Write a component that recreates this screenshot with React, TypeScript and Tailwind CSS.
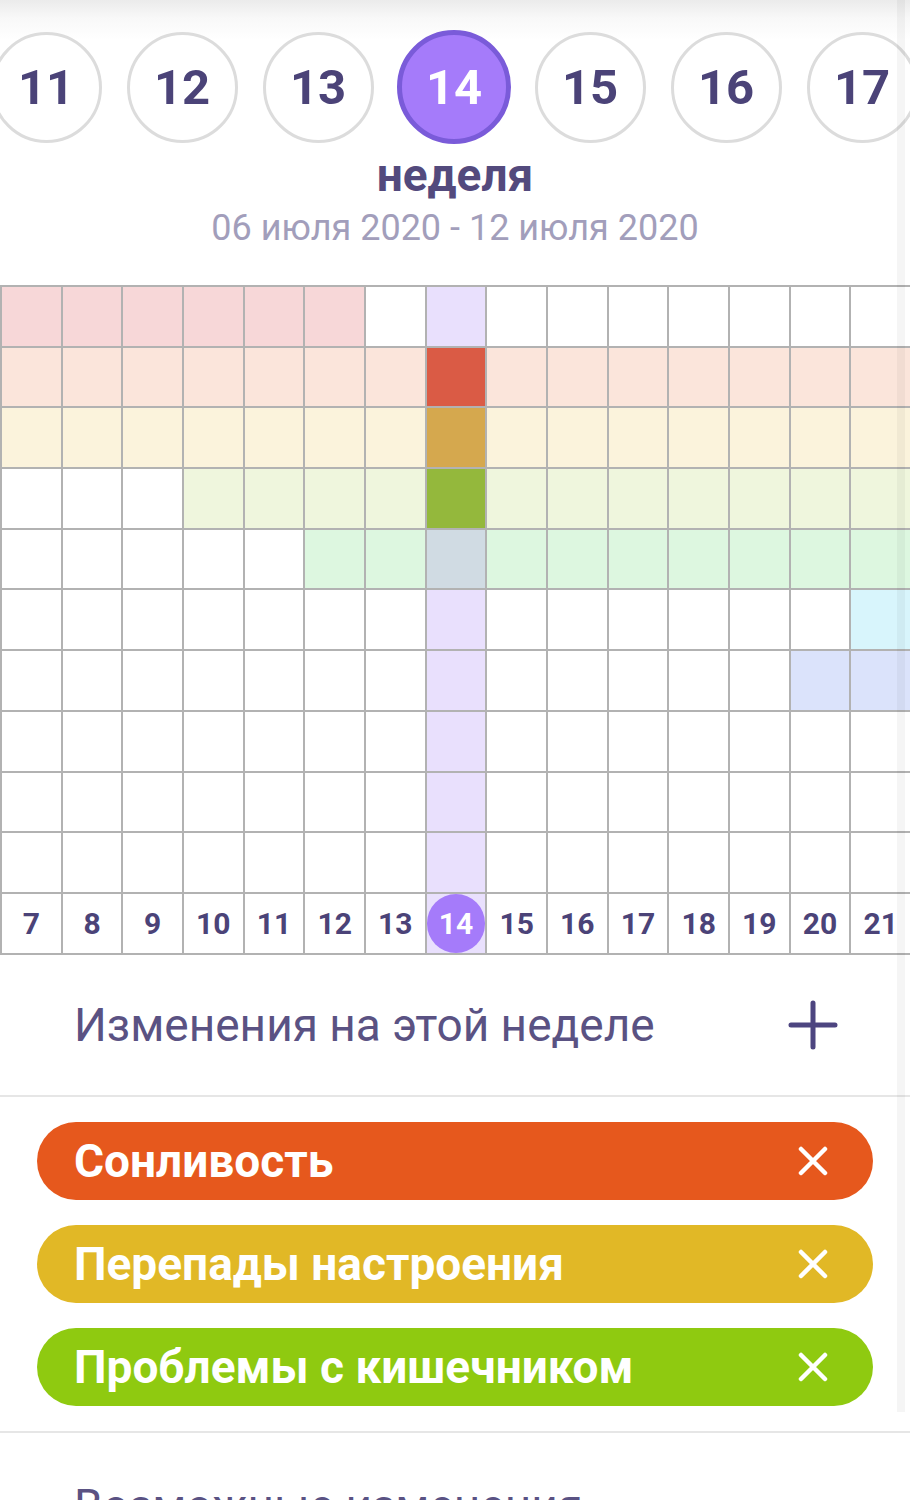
import React from "react";

const weeks = [11, 12, 13, 14, 15, 16, 17];

const W = "bg-white";
const PINK = "bg-[#f7d7d8]";
const PEACH = "bg-[#fbe5db]";
const CREAM = "bg-[#fbf3dc]";
const LGREEN = "bg-[#eff6dd]";
const MINT = "bg-[#ddf7e0]";
const LAV = "bg-[#e9e0fd]";
const CYAN = "bg-[#d8f5fc]";
const PERI = "bg-[#dbe3fb]";

function row(fill: (c: number) => string): string[] {
  return Array.from({ length: 15 }, (_, c) => fill(c));
}

const rows: string[][] = [
  row((c) => (c <= 5 ? PINK : c === 7 ? LAV : W)),
  row((c) => (c === 7 ? "bg-[#da5b45]" : PEACH)),
  row((c) => (c === 7 ? "bg-[#d5a84e]" : CREAM)),
  row((c) => (c === 7 ? "bg-[#94b83c]" : c <= 2 ? W : LGREEN)),
  row((c) => (c === 7 ? "bg-[#d0dbe3]" : c <= 4 ? W : MINT)),
  row((c) => (c === 7 ? LAV : c === 14 ? CYAN : W)),
  row((c) => (c === 7 ? LAV : c >= 13 ? PERI : W)),
  row((c) => (c === 7 ? LAV : W)),
  row((c) => (c === 7 ? LAV : W)),
  row((c) => (c === 7 ? LAV : W)),
];

const days = [7, 8, 9, 10, 11, 12, 13, 14, 15, 16, 17, 18, 19, 20, 21];

const pills = [
  { label: "Сонливость", cls: "bg-[#e6581d]" },
  { label: "Перепады настроения", cls: "bg-[#e1b826]" },
  { label: "Проблемы с кишечником", cls: "bg-[#8fca10]" },
];

function XIcon() {
  return (
    <svg width="30" height="30" viewBox="0 0 30 30" fill="none">
      <path d="M3 3 L27 27 M27 3 L3 27" stroke="white" strokeWidth="4.5" strokeLinecap="round" />
    </svg>
  );
}

function PlusIcon() {
  return (
    <svg width="50" height="50" viewBox="0 0 50 50" fill="none">
      <path d="M25 3 V47 M3 25 H47" stroke="#4d4580" strokeWidth="5" strokeLinecap="round" />
    </svg>
  );
}

export default function App() {
  return (
    <div className="relative w-[910px] h-[1500px] overflow-hidden bg-white font-['Roboto',sans-serif]">
      {/* header */}
      <div className="bg-[linear-gradient(to_bottom,#ebebeb_0px,#f8f8f8_18px,#ffffff_40px)] pt-[30px]">
        <div className="flex h-[114px] items-center ml-[-22px]">
          {weeks.map((w) => (
            <div key={w} className="w-[136px] shrink-0 flex justify-center items-center">
              {w === 14 ? (
                <div className="w-[114px] h-[114px] rounded-full bg-[#a57bfa] border-[5px] border-[#7a5bd9] flex items-center justify-center text-white text-[49px] font-bold leading-none">
                  {w}
                </div>
              ) : (
                <div className="w-[111px] h-[111px] rounded-full bg-white border-[3px] border-[#dcdcdc] flex items-center justify-center text-[#4b4378] text-[49px] font-bold leading-none">
                  {w}
                </div>
              )}
            </div>
          ))}
        </div>
        <div className="mt-[7px] text-center text-[46px] leading-[48px] font-bold text-[#534a7d]">неделя</div>
        <div className="mt-[7px] text-center text-[36px] leading-[44px] text-[#a29ebb]">06 июля 2020 - 12 июля 2020</div>
      </div>

      {/* grid */}
      <div className="mt-[35px] bg-[#b2b2b2] pl-[2px] pt-[2px] pb-[2px] grid grid-cols-[repeat(15,minmax(0,1fr))] auto-rows-[58.7px] gap-[2px]">
        {rows.map((r, ri) =>
          r.map((cls, ci) => <div key={`${ri}-${ci}`} className={cls} />)
        )}
        {days.map((d) =>
          d === 14 ? (
            <div key={d} className={`${LAV} flex items-center justify-center`}>
              <div className="w-full h-full rounded-full bg-[#a57bfa] flex items-center justify-center text-white text-[30px] font-bold">
                {d}
              </div>
            </div>
          ) : (
            <div key={d} className="bg-white flex items-center justify-center text-[#4b4378] text-[30px] font-bold">
              {d}
            </div>
          )
        )}
      </div>

      {/* changes this week */}
      <div className="h-[142px] flex items-center justify-between pl-[74px] pr-[72px] border-b-2 border-[#e6e6e6]">
        <span className="text-[46px] leading-[52px] text-[#5a5283]">Изменения на этой неделе</span>
        <PlusIcon />
      </div>

      <div className="pt-[25px] pb-[25px] pl-[37px] pr-[37px] flex flex-col gap-[25px] border-b-2 border-[#e6e6e6]">
        {pills.map((p) => (
          <div key={p.label} className={`${p.cls} h-[78px] rounded-full flex items-center justify-between pl-[37px] pr-[45px]`}>
            <span className="text-white text-[46px] font-bold leading-none">{p.label}</span>
            <XIcon />
          </div>
        ))}
      </div>

      <div className="pt-[49px] pl-[74px] text-[46px] text-[#5a5283] leading-[48px]">Возможные изменения</div>

      {/* right edge shading */}
      <div className="absolute left-[897px] top-0 w-[8px] h-[1412px] bg-black/[0.04]" />
    </div>
  );
}
